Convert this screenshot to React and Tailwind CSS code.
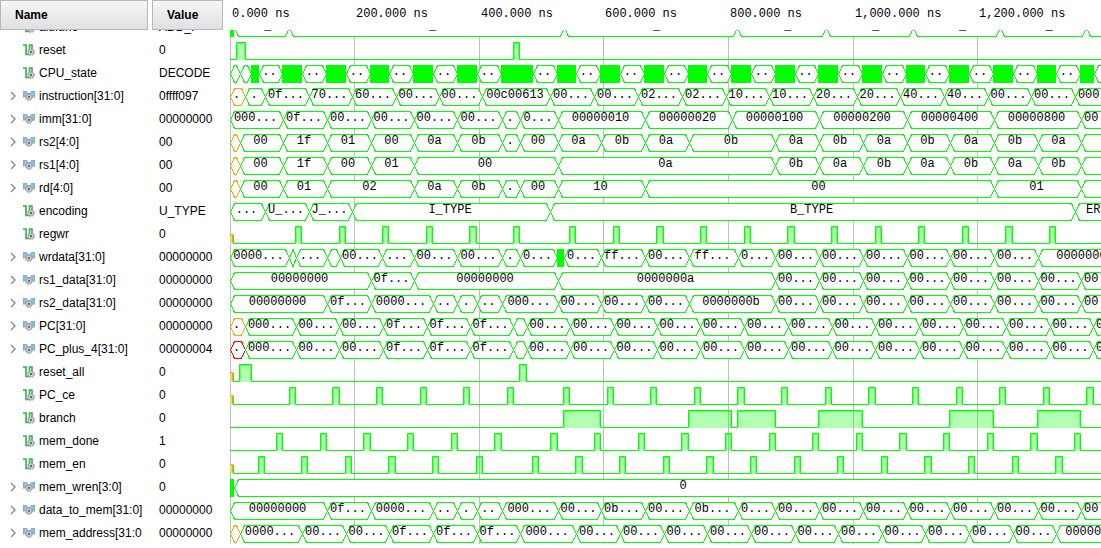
import React from "react";

const GRID = [0, 124, 249, 373, 498, 623, 747];
const LABELS = ["0.000 ns", "200.000 ns", "400.000 ns", "600.000 ns", "800.000 ns", "1,000.000 ns", "1,200.000 ns"];

const MONO = "font-['Liberation_Mono',monospace] text-[12px]";

// Bus rows: [end, label, kind]; each segment starts where the previous one ends.
// kind: "x" unknown (orange), "r" invalid (red), "f" solid block.
const SIGNALS = [
  {
    name: "alufunc", value: "ADD_F", top: true,
    bus: [[4, "", "f"], [59, "ADD_F"], [334, "ADD_I"], [507, "ADD_I"], [596, "ADD_I"], [683, "ADD_I"], [770, "ADD_I"], [856, "ADD_I"], [944, ""]],
  },
  { name: "reset", value: "0", pulses: [[6, 15], [283, 289]] },
  {
    name: "CPU_state", value: "DECODE",
    bus: [
      [10, ""], [21, ""], [29, "", "f"], [52, ".."], [72, "", "f"], [96, ".."], [116, "", "f"], [140, ".."], [159, "", "f"],
      [183, ".."], [203, "", "f"], [227, ".."], [247, "", "f"], [271, ".."], [303, "", "f"], [327, ".."], [346, "", "f"],
      [370, ".."], [390, "", "f"], [414, ".."], [434, "", "f"], [458, ".."], [477, "", "f"], [501, ".."], [521, "", "f"],
      [545, ".."], [565, "", "f"], [588, ".."], [608, "", "f"], [632, ".."], [652, "", "f"], [676, ".."], [695, "", "f"],
      [719, ".."], [739, "", "f"], [763, ".."], [783, "", "f"], [807, ".."], [826, "", "f"], [850, ".."], [864, "", "f"],
      [888, ""],
    ],
  },
  {
    name: "instruction[31:0]", value: "0ffff097",
    bus: [
      [15, ".", "x"], [35, "."], [79, "0f..."], [122, "70..."], [166, "60..."], [209, "00..."], [252, "00..."], [320, "00c00613"],
      [364, "00..."], [408, "00..."], [452, "02..."], [496, "02..."], [539, "10..."], [583, "10..."], [627, "20..."], [670, "20..."],
      [714, "40..."], [758, "40..."], [801, "00..."], [845, "00..."], [896, "000..."],
    ],
  },
  {
    name: "imm[31:0]", value: "00000000",
    bus: [
      [53, "000..."], [97, "0f..."], [141, "00..."], [184, "00..."], [227, "00..."], [272, "00..."], [290, "."], [328, "0..."],
      [415, "00000010"], [502, "00000020"], [589, "00000100"], [677, "00000200"], [764, "00000400"], [851, "00000800"], [895, "00..."],
    ],
  },
  {
    name: "rs2[4:0]", value: "00",
    bus: [
      [10, "", "x"], [53, "00"], [97, "1f"], [141, "01"], [184, "00"], [227, "0a"], [272, "0b"], [290, "."], [328, "00"],
      [371, "0a"], [415, "0b"], [459, "0a"], [545, "0b"], [589, "0a"], [633, "0b"], [677, "0a"], [720, "0b"], [764, "0a"],
      [808, "0b"], [851, "0a"], [939, ""],
    ],
  },
  {
    name: "rs1[4:0]", value: "00",
    bus: [
      [10, "", "x"], [53, "00"], [97, "1f"], [141, "00"], [184, "01"], [328, "00"], [545, "0a"], [589, "0b"], [633, "0a"],
      [677, "0b"], [720, "0a"], [764, "0b"], [808, "0a"], [851, "0b"], [939, ""],
    ],
  },
  {
    name: "rd[4:0]", value: "00",
    bus: [
      [10, "", "x"], [53, "00"], [97, "01"], [184, "02"], [227, "0a"], [272, "0b"], [290, "."], [328, "00"], [415, "10"],
      [764, "00"], [851, "01"], [939, ""],
    ],
  },
  {
    name: "encoding", value: "U_TYPE",
    bus: [[35, "..."], [79, "U_..."], [122, "J_..."], [320, "I_TYPE"], [845, "B_TYPE"], [905, "ERROR"]],
  },
  {
    name: "regwr", value: "0", unknown: true,
    pulses: [
      [65, 71], [109, 115], [152, 158], [196, 202], [239, 246], [283, 289], [339, 345], [383, 389], [426, 433], [470, 476],
      [514, 520], [557, 564], [601, 607], [645, 651], [688, 694], [732, 738], [775, 782], [819, 825],
    ],
  },
  {
    name: "wrdata[31:0]", value: "00000000",
    bus: [
      [59, "0000..."], [66, ""], [97, "..."], [110, ""], [152, "00..."], [184, "..."], [227, "00..."], [272, "00..."],
      [290, "."], [327, "0..."], [334, "", "f"], [371, "0..."], [415, "ff..."], [459, "00..."], [508, "ff..."], [545, "0..."],
      [589, "00..."], [633, "00..."], [677, "00..."], [720, "00..."], [764, "00..."], [808, "00..."], [904, "00000000"],
    ],
  },
  {
    name: "rs1_data[31:0]", value: "00000000",
    bus: [
      [141, "00000000"], [184, "0f..."], [328, "00000000"], [545, "0000000a"], [589, "00..."], [633, "00..."], [677, "00..."],
      [720, "00..."], [764, "00..."], [808, "00..."], [851, "00..."], [895, "00..."],
    ],
  },
  {
    name: "rs2_data[31:0]", value: "00000000",
    bus: [
      [97, "00000000"], [141, "0f..."], [203, "0000..."], [227, ".."], [247, "."], [272, ".."], [328, "000..."], [371, "00..."],
      [415, "00..."], [459, "00..."], [545, "0000000b"], [589, "00..."], [633, "00..."], [677, "00..."], [720, "00..."],
      [764, "00..."], [808, "00..."], [851, "00..."], [895, "00..."],
    ],
  },
  {
    name: "PC[31:0]", value: "00000000",
    bus: [
      [15, ".", "x"], [66, "000..."], [109, "00..."], [153, "00..."], [197, "0f..."], [240, "0f..."], [283, "0f..."], [297, ""],
      [340, "00..."], [384, "00..."], [427, "00..."], [470, "00..."], [514, "00..."], [558, "00..."], [602, "00..."],
      [645, "00..."], [689, "00..."], [733, "00..."], [776, "00..."], [820, "00..."], [863, "00..."], [907, "00..."],
    ],
  },
  {
    name: "PC_plus_4[31:0]", value: "00000004",
    bus: [
      [15, ".", "r"], [66, "000..."], [109, "00..."], [153, "00..."], [197, "0f..."], [240, "0f..."], [283, "0f..."], [297, ""],
      [340, "00..."], [384, "00..."], [427, "00..."], [470, "00..."], [514, "00..."], [558, "00..."], [602, "00..."],
      [645, "00..."], [689, "00..."], [733, "00..."], [776, "00..."], [820, "00..."], [863, "00..."], [907, "00..."],
    ],
  },
  { name: "reset_all", value: "0", unknown: true, pulses: [[9, 21], [289, 296]] },
  {
    name: "PC_ce", value: "0", unknown: true,
    pulses: [
      [59, 65], [102, 109], [146, 152], [190, 196], [233, 239], [277, 283], [333, 339], [377, 383], [420, 426], [464, 470],
      [507, 514], [551, 557], [595, 601], [638, 645], [682, 688], [726, 732], [769, 775], [813, 819], [856, 863],
    ],
  },
  { name: "branch", value: "0", pulses: [[333, 370], [458, 501], [507, 545], [588, 632], [719, 763], [807, 850]] },
  {
    name: "mem_done", value: "1",
    pulses: [
      [46, 52], [90, 96], [133, 140], [177, 183], [221, 227], [264, 271], [320, 327], [364, 370], [408, 414], [451, 458],
      [495, 501], [539, 545], [582, 588], [626, 632], [669, 676], [713, 719], [757, 763], [800, 807], [844, 850],
    ],
  },
  {
    name: "mem_en", value: "0", unknown: true,
    pulses: [
      [28, 34], [71, 77], [115, 121], [158, 165], [202, 208], [246, 252], [302, 308], [345, 352], [389, 395], [433, 439],
      [476, 483], [520, 526], [564, 570], [607, 613], [651, 657], [694, 701], [738, 744], [782, 788], [825, 832],
    ],
  },
  { name: "mem_wren[3:0]", value: "0", bus: [[4, "", "f"], [904, "0"]] },
  {
    name: "data_to_mem[31:0]", value: "00000000",
    bus: [
      [97, "00000000"], [141, "0f..."], [203, "0000..."], [227, ".."], [247, "."], [272, ".."], [328, "000..."], [371, "00..."],
      [415, "0b..."], [459, "00..."], [508, "0b..."], [545, "0..."], [589, "00..."], [633, "00..."], [677, "00..."],
      [720, "00..."], [764, "00..."], [808, "00..."], [851, "00..."], [895, "00..."],
    ],
  },
  {
    name: "mem_address[31:0", value: "00000000",
    bus: [
      [10, "", "x"], [72, "0000..."], [116, "00..."], [159, "00..."], [203, "0f..."], [247, "0f..."], [290, "0f..."],
      [346, "000..."], [390, "00..."], [434, "00..."], [477, "00..."], [521, "00..."], [565, "00..."], [608, "00..."],
      [652, "00..."], [695, "00..."], [739, "00..."], [783, "00..."], [826, "00..."], [904, "00000000"],
    ],
  },
];

const STROKES = { x: "#ffa500", r: "#ff0000" };

function Bus({ segments }) {
  let start = 0;
  return segments.map(([end, label, kind], i) => {
    const a = start;
    start = end;
    if (kind === "f") return <rect key={i} x={a} y="4" width={end - a} height="18" fill="#00ff00" />;
    const l = a + 0.5;
    const r = end + 0.5;
    const d = Math.min(4, (r - l) / 2);
    const color = STROKES[kind] || "#00ff00";
    return (
      <g key={i} fill="none" stroke={color}>
        <path d={`M${l} 13L${l + d} 4.5H${r - d}L${r} 13L${r - d} 21.5H${l + d}Z`} fill="#fff" stroke="none" />
        <path d={`M${l + d} 4.5L${l} 13L${l + d} 21.5M${r - d} 4.5L${r} 13L${r - d} 21.5`} shapeRendering="crispEdges" />
        <path d={`M${l + d - 0.5} 4.5H${r - d + 0.5}M${l + d - 0.5} 21.5H${r - d + 0.5}`} />
        {label && (
          <text x={(a + end) / 2 - 1} y="14" textAnchor="middle" fill="#000" stroke="none">
            {label}
          </text>
        )}
      </g>
    );
  });
}

function Level({ pulses, unknown }) {
  const from = unknown ? 3 : 0;
  const line = pulses.map(([a, b]) => `H${a + 0.5}V4.5H${b + 0.5}V21.5`).join("");
  return (
    <g>
      {pulses.map(([a, b]) => (
        <g key={a}>
          <rect x={a} y="4" width={b - a + 1} height="18" fill="#00ff00" fillOpacity="0.3" />
          <path d={`M${a + 1.5} 21V5.5H${b - 0.5}V21`} fill="none" stroke="#00ff00" strokeOpacity="0.4" />
        </g>
      ))}
      <path d={`M${from} 21.5${line}H4000`} fill="none" stroke="#00ff00" />
      {unknown && (
        <g>
          <rect x="0" y="13" width="2" height="8" fill="#ffc87a" />
          <path d="M0 12.5H3" fill="none" stroke="#ffa500" />
          <path d="M2.5 13V21" fill="none" stroke="#ffa500" />
          <path d="M3.5 13V22" fill="none" stroke="#00ff00" />
        </g>
      )}
    </g>
  );
}

function Wave({ signal }) {
  return (
    <svg className={`block h-[23px] w-full overflow-hidden ${MONO}`} role="img" aria-label={signal.name}>
      {GRID.map((x) => (
        <rect key={x} x={x} y={signal.top ? 22 : 0} width="1" height="23" fill="#bebebe" />
      ))}
      {signal.bus ? <Bus segments={signal.bus} /> : <Level pulses={signal.pulses} unknown={signal.unknown} />}
    </svg>
  );
}

function Gear({ cx, cy }) {
  return (
    <g>
      <circle cx={cx} cy={cy} r="3.3" fill="#b4b4b4" />
      <circle cx={cx} cy={cy} r="3.4" fill="none" stroke="#8f8f8f" strokeDasharray="1.4 1.27" />
      <circle cx={cx} cy={cy} r="2.1" fill="#dcdcdc" />
      <circle cx={cx} cy={cy} r="1.2" fill="#6a6a6a" />
    </g>
  );
}

function ScalarIcon() {
  return (
    <svg className="h-3 w-3 shrink-0" viewBox="0 0 12 12" aria-hidden="true">
      <path d="M0 1H3V10.5H6.5V1H9V6" fill="none" stroke="#2db24c" strokeWidth="1.6" />
      <Gear cx={8} cy={8} />
    </svg>
  );
}

function VectorIcon() {
  return (
    <svg className="h-3 w-3 shrink-0" viewBox="0 0 12 12" aria-hidden="true">
      <path d="M0 1H4L5 3H7L8 1H12V7.5H0Z" fill="#8dc1df" />
      <path d="M0.5 7.5V1.5H3.5M8.5 1.5H11.5V7.5" fill="none" stroke="#7aa9c2" strokeWidth="0.8" />
      <Gear cx={6} cy={7} />
    </svg>
  );
}

const HEAD =
  "h-[30px] w-full border border-[#b8b8b8] bg-linear-to-b from-[#f6f6f7] to-[#e0e0e3] text-left text-[12px] font-bold";

export default function App() {
  return (
    <div className="overflow-hidden bg-white font-['Liberation_Sans',Arial,sans-serif] text-[12px] text-black">
      <table className="block w-full">
        <thead className="relative z-10 block h-[30px] bg-white">
          <tr className="grid grid-cols-[152px_78px_1fr]">
            <th className="p-0 pr-1">
              <button type="button" className={`${HEAD} pl-[14px]`}>Name</button>
            </th>
            <th className="p-0 pr-[7px]">
              <button type="button" className={`${HEAD} pl-[14px]`}>Value</button>
            </th>
            <th className="min-w-0 p-0 font-normal">
              <svg className={`block h-[30px] w-full overflow-hidden ${MONO}`}>
                {LABELS.map((label, i) => (
                  <text key={label} x={GRID[i] + 2} y="17">{label}</text>
                ))}
              </svg>
            </th>
          </tr>
        </thead>
        <tbody className="-mt-[15px] block">
          {SIGNALS.map((s) => {
            const vector = s.name.includes("[");
            return (
              <tr key={s.name} className="grid h-[23px] grid-cols-[152px_78px_1fr]">
                <td className="mr-1 flex min-w-0 items-center overflow-hidden p-0 pl-2 whitespace-nowrap">
                  <span className="flex w-[15px] shrink-0">
                    {vector && (
                      <button type="button" aria-label={`Expand ${s.name}`} className="flex h-3 w-2 items-center">
                        <svg className="h-3 w-2" viewBox="0 0 8 12" aria-hidden="true">
                          <path d="M3 2L7 6L3 10" fill="none" stroke="#8a8a8a" strokeWidth="1.4" />
                        </svg>
                      </button>
                    )}
                  </span>
                  {vector ? <VectorIcon /> : <ScalarIcon />}
                  <span className="pl-1">{s.name}</span>
                </td>
                <td className="flex items-center p-0 pl-[7px] whitespace-nowrap">{s.value}</td>
                <td className="min-w-0 p-0">
                  <Wave signal={s} />
                </td>
              </tr>
            );
          })}
        </tbody>
      </table>
    </div>
  );
}
